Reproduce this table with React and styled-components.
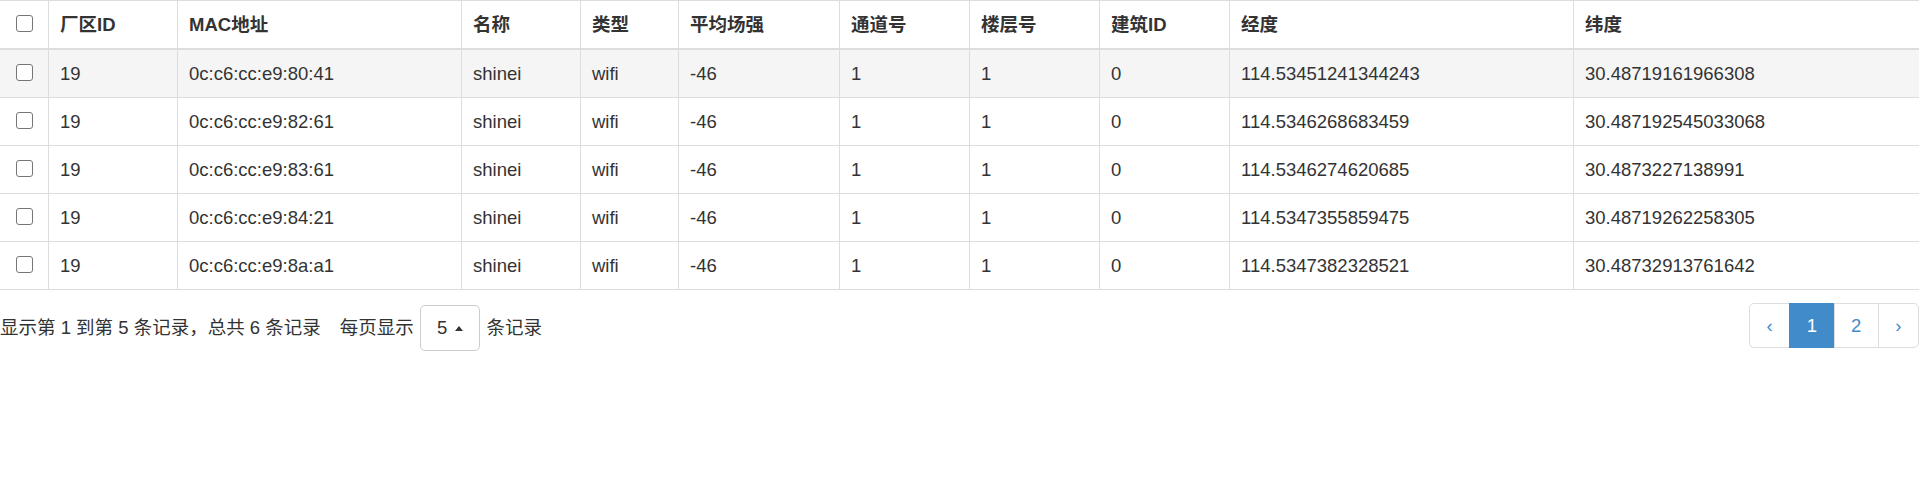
import React from "react";
import styled, { createGlobalStyle } from "styled-components";

const Global = createGlobalStyle`
  html, body { margin: 0; padding: 0; background: #fff; }
  body {
    font-family: "Liberation Sans", Arial, "Noto Sans CJK SC", sans-serif;
    font-size: 18.5px;
    color: #333;
    overflow-x: hidden;
  }
`;

const Wrap = styled.div`
  width: 1919px;
`;

const Table = styled.table`
  width: 1919px;
  table-layout: fixed;
  border-collapse: separate;
  border-spacing: 0;
`;

const HeadCell = styled.th`
  font-weight: bold;
  text-align: ${(p) => (p.$center ? "center" : "left")};
  padding: 10.5px 11px;
  line-height: 26px;
  border-top: 1px solid #ddd;
  border-bottom: 2px solid #ddd;
  border-right: 1px solid #ddd;
  vertical-align: middle;
  white-space: nowrap;
  &:last-child { border-right: 0; }
`;

const Row = styled.tr`
  background: ${(p) => (p.$hover ? "#f5f5f5" : "#fff")};
`;

const Cell = styled.td`
  text-align: ${(p) => (p.$center ? "center" : "left")};
  padding: 10.5px 11px;
  line-height: 26px;
  border-bottom: 1px solid #ddd;
  border-right: 1px solid #ddd;
  vertical-align: middle;
  white-space: nowrap;
  &:last-child { border-right: 0; }
`;

const Check = styled.span`
  display: inline-block;
  box-sizing: border-box;
  width: 17px;
  height: 17px;
  border: 1px solid #767676;
  border-radius: 3px;
  background: #fff;
  vertical-align: middle;
  position: relative;
  top: -2px;
`;

const Footer = styled.div`
  display: flex;
  justify-content: space-between;
  align-items: flex-start;
`;

const Detail = styled.div`
  padding-top: 15px;
  line-height: 26px;
  white-space: nowrap;
`;

const Info = styled.span`
  margin-right: 19px;
`;

const DropButton = styled.span`
  display: inline-block;
  box-sizing: border-box;
  height: 46px;
  padding: 9px 16px;
  line-height: 26px;
  border: 1px solid #ccc;
  border-radius: 5px;
  background: #fff;
  color: #333;
  margin: 0 1px;
`;

const Caret = styled.span`
  display: inline-block;
  width: 0;
  height: 0;
  margin-left: 3px;
  border-left: 4.5px solid transparent;
  border-right: 4.5px solid transparent;
  border-bottom: 5px solid #333;
  vertical-align: middle;
  position: relative;
  top: -1px;
`;

const Pager = styled.ul`
  display: flex;
  list-style: none;
  margin: 13px 0 0 0;
  padding: 0;
`;

const PageLink = styled.li`
  box-sizing: border-box;
  height: 45px;
  padding: 8.5px 16.5px;
  line-height: 26px;
  border: 1px solid ${(p) => (p.$active ? "#428bca" : "#ddd")};
  background: ${(p) => (p.$active ? "#428bca" : "#fff")};
  color: ${(p) => (p.$active ? "#fff" : "#428bca")};
  margin-left: -1px;
  &:first-child {
    margin-left: 0;
    border-radius: 5px 0 0 5px;
  }
  &:last-child {
    border-radius: 0 5px 5px 0;
  }
`;

const widths = [49, 129, 284, 119, 98, 161, 130, 130, 130, 344, 345];
const headers = ["厂区ID", "MAC地址", "名称", "类型", "平均场强", "通道号", "楼层号", "建筑ID", "经度", "纬度"];

const rows = [
  ["19", "0c:c6:cc:e9:80:41", "shinei", "wifi", "-46", "1", "1", "0", "114.53451241344243", "30.48719161966308"],
  ["19", "0c:c6:cc:e9:82:61", "shinei", "wifi", "-46", "1", "1", "0", "114.5346268683459", "30.487192545033068"],
  ["19", "0c:c6:cc:e9:83:61", "shinei", "wifi", "-46", "1", "1", "0", "114.5346274620685", "30.4873227138991"],
  ["19", "0c:c6:cc:e9:84:21", "shinei", "wifi", "-46", "1", "1", "0", "114.5347355859475", "30.48719262258305"],
  ["19", "0c:c6:cc:e9:8a:a1", "shinei", "wifi", "-46", "1", "1", "0", "114.5347382328521", "30.48732913761642"],
];

export default function App() {
  return (
    <Wrap>
      <Global />
      <Table>
        <colgroup>
          {widths.map((w, i) => (
            <col key={i} style={{ width: w }} />
          ))}
        </colgroup>
        <thead>
          <tr>
            <HeadCell $center>
              <Check />
            </HeadCell>
            {headers.map((h) => (
              <HeadCell key={h}>{h}</HeadCell>
            ))}
          </tr>
        </thead>
        <tbody>
          {rows.map((r, i) => (
            <Row key={i} $hover={i === 0}>
              <Cell $center>
                <Check />
              </Cell>
              {r.map((v, j) => (
                <Cell key={j}>{v}</Cell>
              ))}
            </Row>
          ))}
        </tbody>
      </Table>
      <Footer>
        <Detail>
          <Info>显示第 1 到第 5 条记录，总共 6 条记录</Info>
          每页显示{" "}
          <DropButton>
            5 <Caret />
          </DropButton>{" "}
          条记录
        </Detail>
        <Pager>
          <PageLink>‹</PageLink>
          <PageLink $active>1</PageLink>
          <PageLink>2</PageLink>
          <PageLink>›</PageLink>
        </Pager>
      </Footer>
    </Wrap>
  );
}
